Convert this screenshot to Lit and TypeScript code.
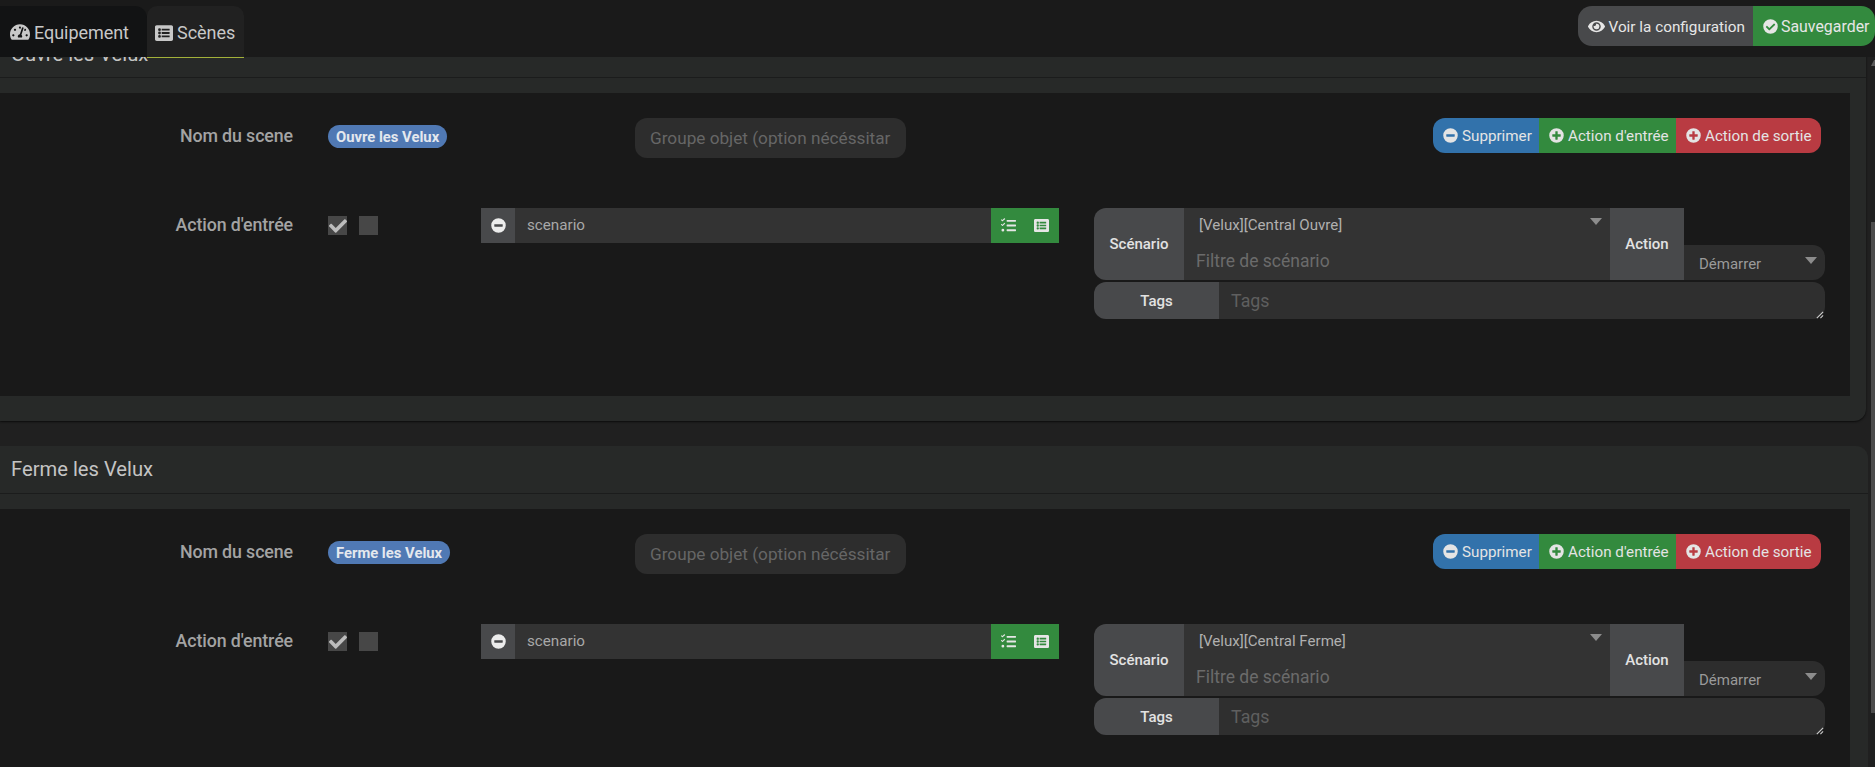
import { LitElement, html, css, svg } from "lit";
import { customElement } from "lit/decorators.js";

const ic = (vb: string, d: any, cls = "ic") => html`<svg class=${cls} viewBox=${vb} fill="currentColor">${d}</svg>`;
const minus = ic("0 0 512 512", svg`<path d="M256 8a248 248 0 1 0 0 496 248 248 0 0 0 0-496zM124 296c-7 0-12-5-12-12v-56c0-7 5-12 12-12h264c7 0 12 5 12 12v56c0 7-5 12-12 12H124z"/>`);
const plus = ic("0 0 512 512", svg`<path d="M256 8a248 248 0 1 0 0 496 248 248 0 0 0 0-496zm144 276c0 7-5 12-12 12h-92v92c0 7-5 12-12 12h-56c-7 0-12-5-12-12v-92h-92c-7 0-12-5-12-12v-56c0-7 5-12 12-12h92v-92c0-7 5-12 12-12h56c7 0 12 5 12 12v92h92c7 0 12 5 12 12v56z"/>`);
const check = ic("0 0 512 512", svg`<path d="M504 256a248 248 0 1 1-496 0 248 248 0 0 1 496 0zM227 387l184-184c6-6 6-16 0-22l-23-23c-6-6-16-6-22 0L216 308l-70-70c-6-6-16-6-22 0l-23 23c-6 6-6 16 0 22l104 104c6 6 16 6 22 0z"/>`);
const eye = ic("0 0 576 512", svg`<path d="M572 241C518 136 410 64 288 64S58 136 4 241a32 32 0 0 0 0 30c54 105 162 177 284 177s230-72 284-177a32 32 0 0 0 0-30zM288 400a144 144 0 1 1 0-288 144 144 0 0 1 0 288zm0-240a95 95 0 0 0-25 4 48 48 0 0 1-67 67 96 96 0 1 0 92-71z"/>`);
const listAlt = ic("0 0 512 512", svg`<path d="M464 480H48c-26 0-48-22-48-48V80c0-26 22-48 48-48h416c26 0 48 22 48 48v352c0 26-22 48-48 48zM128 120a40 40 0 1 0 0 80 40 40 0 0 0 0-80zm0 96a40 40 0 1 0 0 80 40 40 0 0 0 0-80zm0 96a40 40 0 1 0 0 80 40 40 0 0 0 0-80zm288-136v-32c0-7-5-12-12-12H202c-7 0-12 5-12 12v32c0 7 5 12 12 12h202c7 0 12-5 12-12zm0 96v-32c0-7-5-12-12-12H202c-7 0-12 5-12 12v32c0 7 5 12 12 12h202c7 0 12-5 12-12zm0 96v-32c0-7-5-12-12-12H202c-7 0-12 5-12 12v32c0 7 5 12 12 12h202c7 0 12-5 12-12z"/>`);
const tasks = ic("0 0 512 512", svg`<path d="M139 26l-16-16c-4-4-10-4-14 0L49 69 28 48c-4-4-10-4-14 0L3 59c-4 4-4 10 0 14l40 40c4 4 11 4 15 0l16-16 65-57c4-4 4-10 0-14zm0 159l-16-16c-4-4-10-4-14 0l-60 59-21-21c-4-4-10-4-14 0L3 217c-4 4-4 10 0 14l40 40c4 4 11 4 15 0l16-16 65-56c4-4 4-10 0-14zM64 368a48 48 0 1 0 0 96 48 48 0 0 0 0-96zm432 16H208c-9 0-16 7-16 16v32c0 9 7 16 16 16h288c9 0 16-7 16-16v-32c0-9-7-16-16-16zm0-320H208c-9 0-16 7-16 16v32c0 9 7 16 16 16h288c9 0 16-7 16-16V80c0-9-7-16-16-16zm0 160H208c-9 0-16 7-16 16v32c0 9 7 16 16 16h288c9 0 16-7 16-16v-32c0-9-7-16-16-16z"/>`);
const gauge = ic("0 0 576 512", svg`<path d="M288 32C128.94 32 0 160.94 0 320c0 52.8 14.25 102.26 39.06 144.8 5.61 9.62 16.3 15.2 27.44 15.2h443c11.14 0 21.83-5.58 27.44-15.2C561.75 422.26 576 372.8 576 320c0-159.06-128.94-288-288-288zm0 64c14.71 0 26.58 10.13 30.32 23.65-1.11 2.26-2.64 4.23-3.45 6.67l-9.22 27.67c-5.13 3.49-10.97 6.01-17.64 6.01-17.67 0-32-14.33-32-32S270.33 96 288 96zM96 384c-17.67 0-32-14.33-32-32s14.33-32 32-32 32 14.33 32 32-14.33 32-32 32zm48-160c-17.67 0-32-14.33-32-32s14.33-32 32-32 32 14.33 32 32-14.33 32-32 32zm246.77-72.41l-61.33 184C343.13 347.33 352 364.54 352 384c0 11.72-3.38 22.55-8.88 32H232.88c-5.5-9.45-8.88-20.28-8.88-32 0-33.94 26.5-61.43 59.9-63.59l61.34-184.01c4.17-12.56 17.73-19.45 30.36-15.17 12.57 4.19 19.35 17.79 15.17 30.36zm14.66 57.2l15.52-46.55c3.47-1.29 7.13-2.23 11.05-2.23 17.67 0 32 14.33 32 32s-14.33 32-32 32c-11.38-.01-20.89-6.28-26.57-15.22zM480 384c-17.67 0-32-14.33-32-32s14.33-32 32-32 32 14.33 32 32-14.33 32-32 32z"/>`);
const resize = html`<svg class="grip" viewBox="0 0 10 10"><path d="M9 2 2 9M9 6 6 9" stroke="#cfcfcf" stroke-width="1.2" fill="none"/></svg>`;

interface Scene { name: string; script: string; }
const scenes: Scene[] = [
  { name: "Ouvre les Velux", script: "[Velux][Central Ouvre]" },
  { name: "Ferme les Velux", script: "[Velux][Central Ferme]" },
];

@customElement("app-root")
export class AppRoot extends LitElement {
  static styles = css`
    :host { display: block; height: 767px; width: 1875px; overflow: hidden; background: #1a1a1a; font-family: Roboto, "Liberation Sans", sans-serif; color: #d0d0d0; position: relative; }
    .ic { width: 1em; height: 1em; flex: none; display: block; }
    .top { height: 57px; display: flex; justify-content: space-between; align-items: flex-start; position: relative; z-index: 2; background: #1a1a1a; }
    .tabs { display: flex; padding-top: 6px; }
    .tab { height: 51px; display: flex; align-items: center; gap: 4px; font-size: 18px; color: #c8c8c8; box-sizing: border-box; letter-spacing: -0.05px; padding-top: 1px; }
    .tab .ic { font-size: 20px; }
    .tab.a { width: 147px; padding-left: 10px; background: #121314; border-radius: 0 12px 0 0; gap: 4px; }
    .tab.b { width: 97px; padding-left: 8px; background: #212121; border-radius: 10px 10px 0 0; border-bottom: 1px solid #a3b13a; height: 52px; padding-top: 2px; }
    .tab.b .ic { font-size: 18px; }
    .actions { display: flex; margin-top: 6px; height: 40px; font-size: 15.3px; color: #e6e6e6; }
    .actions > div { display: flex; align-items: center; box-sizing: border-box; padding-top: 1px; }
    .see { width: 175px; padding-left: 10px; gap: 3.5px; background: #48494b; border-radius: 14px 0 0 14px; }
    .see .ic { font-size: 17px; }
    .save { width: 122px; padding-left: 10px; gap: 3px; background: #338a3e; border-radius: 0 14px 14px 0; font-size: 15.9px; }
    .save .ic { font-size: 15px; }
    .pane { height: 710px; overflow: hidden; background: #202020; }
    .inner { margin-top: -57px; }
    .panel { width: 1866px; background: #272928; border-radius: 0 0 12px 0; padding-bottom: 25px; box-shadow: 0 1px 2px #0c0c0c; }
    .panel + .panel { width: 1868px; margin-top: 25px; border-radius: 0 12px 0 0; box-shadow: none; }
    .ph { height: 77px; box-sizing: border-box; padding: 42px 0 0 11px; }
    .panel + .panel .ph { height: 47px; padding-top: 11px; }
    .hl { font-size: 20.2px; line-height: 24px; color: #c4c4c4; }
    .rule { height: 1px; background: #1b1c1c; margin-bottom: 15px; }
    .body { width: 1850px; height: 303px; background: #191919; box-sizing: border-box; padding-top: 25px; display: flex; flex-direction: column; gap: 50px; }
    .row { display: flex; position: relative; }
    .lab { width: 293px; text-align: right; font-size: 17.8px; font-weight: 500; color: #a3a3a3; letter-spacing: -0.1px; }
    .r1 { height: 40px; align-items: flex-start; }
    .r1 .lab { line-height: 36px; }
    .badge { margin: 7px 0 0 35px; height: 23px; padding: 0 8px; box-sizing: border-box; display: flex; align-items: center; background: #5079b4; border-radius: 12px; font-size: 14.8px; font-weight: 700; color: #e4e8ee; }
    .grpi { position: absolute; left: 635px; top: 0; width: 271px; height: 40px; box-sizing: border-box; padding-left: 15px; display: flex; align-items: center; background: #2d2d2d; border-radius: 12px; font-size: 17.2px; color: #666; white-space: nowrap; overflow: hidden; }
    .btns { margin: 0 29px 0 auto; display: flex; height: 35px; font-size: 15.2px; color: #e4e4e4; }
    .btns > div { display: flex; align-items: center; gap: 4px; padding-left: 10px; box-sizing: border-box; }
    .btns .ic { font-size: 15px; }
    .del { width: 106px; background: #3272ab; border-radius: 12px 0 0 12px; }
    .in { width: 137px; background: #338a3e; }
    .out { width: 145px; background: #b93b42; border-radius: 0 12px 12px 0; }
    .r2 { height: 111px; }
    .r2 .lab { line-height: 34px; }
    .cb { width: 19px; height: 19px; background: #474747; margin-top: 8px; display: flex; align-items: center; justify-content: center; }
    .cb.c { margin-left: 35px; color: #bdbdbd; font-size: 18px; }
    .cb.n { margin-left: 12px; }
    .cmd { position: absolute; left: 481px; top: 0; width: 578px; height: 35px; display: flex; }
    .cmd .m { width: 34px; background: #48494b; display: flex; align-items: center; justify-content: center; color: #ececec; font-size: 15px; }
    .cmd .t { flex: 1; background: #333; font-size: 15.2px; color: #a8a8a8; padding-left: 12px; line-height: 35px; }
    .cmd .g { width: 68px; background: #338a3e; display: flex; align-items: center; gap: 18px; padding-left: 10px; box-sizing: border-box; color: #e6e6e6; font-size: 15px; }
    .opt { position: absolute; left: 1094px; top: 0; width: 731px; }
    .o1 { height: 72px; display: flex; }
    .head { background: #48494b; font-size: 15px; font-weight: 500; color: #e2e2e2; display: flex; align-items: center; justify-content: center; box-sizing: border-box; }
    .o1 .s { width: 90px; border-radius: 12px 0 0 12px; }
    .sel { flex: 1; background: #333; position: relative; }
    .sel .v { position: absolute; left: 15px; top: 8px; font-size: 15.1px; color: #b0b0b0; }
    .sel .f { position: absolute; left: 12px; top: 43px; font-size: 17.5px; color: #6b6b6b; }
    .tri { position: absolute; width: 0; height: 0; border-left: 6.5px solid transparent; border-right: 6.5px solid transparent; border-top: 7px solid #8c8c8c; }
    .sel .tri { right: 8px; top: 10px; }
    .o1 .act { width: 74px; }
    .dem { width: 141px; margin-top: 37px; background: #2d2d2d; border-radius: 0 12px 12px 0; position: relative; font-size: 15px; color: #9a9a9a; }
    .dem span { position: absolute; left: 15px; top: 10px; }
    .dem .tri { right: 8px; top: 12px; }
    .o2 { height: 37px; margin-top: 2px; display: flex; }
    .o2 .h2 { width: 125px; border-radius: 12px 0 0 12px; }
    .ta { flex: 1; background: #2f2f2f; border-radius: 0 12px 12px 0; font-size: 17.8px; color: #5f5f5f; padding: 8px 0 0 12px; position: relative; box-sizing: border-box; }
    .grip { position: absolute; right: 1px; bottom: 0; width: 9px; height: 9px; }
    .sb { position: absolute; right: 0; top: 57px; bottom: 0; width: 4px; background: #1f2020; }
    .arrow { position: absolute; right: 0; top: 3px; width: 0; height: 0; border-left: 3px solid transparent; border-bottom: 6px solid #5a5a5a; border-right: 1px solid #5a5a5a; }
    .thumb { position: absolute; right: 0; left: 0; top: 165px; bottom: 54px; background: #4c4c4c; }
  `;

  private scene(s: Scene) {
    return html`<section class="panel">
      <div class="ph"><div class="hl">${s.name}</div></div>
      <div class="rule"></div>
      <div class="body">
        <div class="row r1">
          <div class="lab">Nom du scene</div>
          <div class="badge">${s.name}</div>
          <div class="grpi">Groupe objet (option nécéssitar</div>
          <div class="btns">
            <div class="del">${minus}Supprimer</div>
            <div class="in">${plus}Action d'entrée</div>
            <div class="out">${plus}Action de sortie</div>
          </div>
        </div>
        <div class="row r2">
          <div class="lab">Action d'entrée</div>
          <div class="cb c">${ic("0 0 512 512", svg`<path d="M173 439 7 273c-10-10-10-26 0-36l36-36c10-10 26-10 36 0l112 112L433 71c10-10 26-10 36 0l36 36c10 10 10 26 0 36L209 439c-10 10-26 10-36 0z"/>`)}</div>
          <div class="cb n"></div>
          <div class="cmd">
            <div class="m">${minus}</div>
            <div class="t">scenario</div>
            <div class="g">${tasks}${listAlt}</div>
          </div>
          <div class="opt">
            <div class="o1">
              <div class="head s">Scénario</div>
              <div class="sel"><span class="v">${s.script}</span><span class="f">Filtre de scénario</span><i class="tri"></i></div>
              <div class="head act">Action</div>
              <div class="dem"><span>Démarrer</span><i class="tri"></i></div>
            </div>
            <div class="o2">
              <div class="head h2">Tags</div>
              <div class="ta">Tags${resize}</div>
            </div>
          </div>
        </div>
      </div>
    </section>`;
  }

  render() {
    return html`
      <div class="top">
        <div class="tabs">
          <div class="tab a">${gauge}Equipement</div>
          <div class="tab b">${listAlt}Scènes</div>
        </div>
        <div class="actions">
          <div class="see">${eye}Voir la configuration</div>
          <div class="save">${check}Sauvegarder</div>
        </div>
      </div>
      <div class="pane"><div class="inner">${scenes.map((s) => this.scene(s))}</div></div>
      <div class="sb"><i class="arrow"></i><div class="thumb"></div></div>
    `;
  }
}
